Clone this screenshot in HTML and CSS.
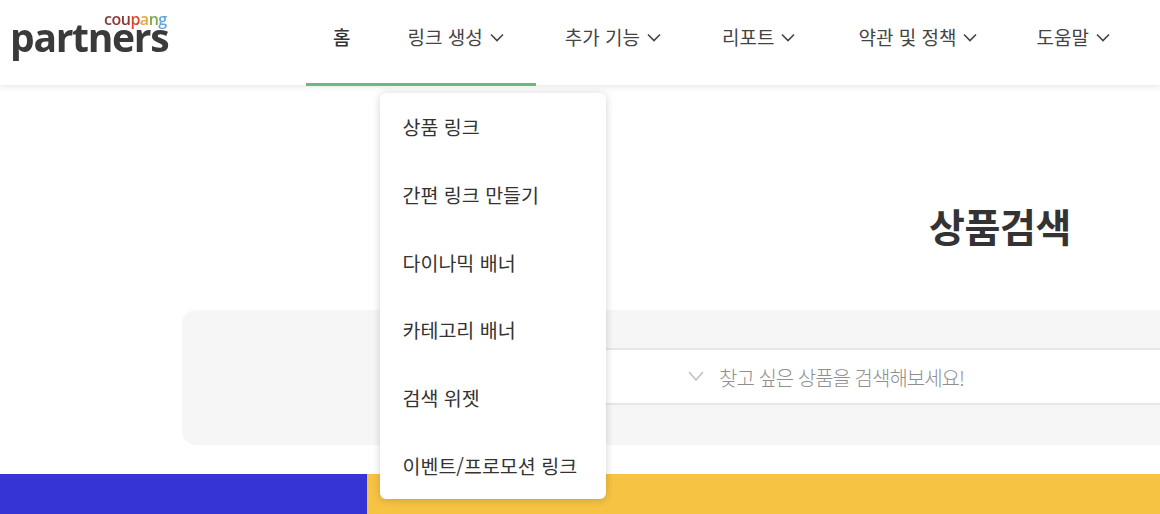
FILE: index.html
```html
<!DOCTYPE html>
<html lang="ko">
<head>
<meta charset="utf-8">
<title>Coupang Partners</title>
<link rel="stylesheet" href="styles.css">
</head>
<body>
<header class="header">
  <a class="logo">
    <span class="logo-top"><span class="c1">cou</span><span class="c2">p</span><span class="c3">a</span><span class="c4">n</span><span class="c5">g</span></span>
    <span class="logo-main">partners</span>
  </a>
  <nav class="nav">
    <a class="nav-item home">홈</a>
    <a class="nav-item link">링크 생성<svg class="chev" viewBox="0 0 14 9"><path d="M1 1.5l6 6 6-6"/></svg></a>
    <a class="nav-item extra">추가 기능<svg class="chev" viewBox="0 0 14 9"><path d="M1 1.5l6 6 6-6"/></svg></a>
    <a class="nav-item report">리포트<svg class="chev" viewBox="0 0 14 9"><path d="M1 1.5l6 6 6-6"/></svg></a>
    <a class="nav-item terms">약관 및 정책<svg class="chev" viewBox="0 0 14 9"><path d="M1 1.5l6 6 6-6"/></svg></a>
    <a class="nav-item help">도움말<svg class="chev" viewBox="0 0 14 9"><path d="M1 1.5l6 6 6-6"/></svg></a>
  </nav>
  <div class="active-bar"></div>
</header>
<ul class="menu">
  <li>상품 링크</li>
  <li>간편 링크 만들기</li>
  <li>다이나믹 배너</li>
  <li>카테고리 배너</li>
  <li>검색 위젯</li>
  <li>이벤트/프로모션 링크</li>
</ul>
<main class="main">
  <h1 class="title">상품검색</h1>
  <section class="panel">
    <div class="search">
      <svg class="search-chev" viewBox="0 0 16 10"><path d="M1 1l7 8 7-8"/></svg>
      <span class="placeholder">찾고 싶은 상품을 검색해보세요!</span>
    </div>
  </section>
  <section class="banners">
    <div class="banner-blue"></div>
    <div class="banner-yellow"></div>
  </section>
</main>
</body>
</html>
```
FILE: styles.css
```css
* { box-sizing: border-box; }
html, body { margin: 0; padding: 0; }
body {
  width: 1160px;
  height: 514px;
  overflow: hidden;
  position: relative;
  background: #fff;
  font-family: "Noto Sans CJK KR", "Noto Sans", sans-serif;
  color: #333;
}
.header {
  height: 85px;
  display: flex;
  align-items: flex-start;
  position: relative;
  background: #fff;
  box-shadow: 0 2px 6px rgba(0, 0, 0, 0.09);
  z-index: 2;
}
.logo {
  width: 306px;
  padding: 12px 0 0 10px;
  display: flex;
  flex-direction: column;
  filter: blur(0.4px);
}
.logo-top {
  font-family: "Open Sans", sans-serif;
  font-weight: 600;
  font-size: 16px;
  line-height: 14px;
  letter-spacing: -0.5px;
  margin-left: 94px;
}
.c1 { color: #8a3a36; }
.c2 { color: #d9482f; }
.c3 { color: #e8a73c; }
.c4 { color: #7fa94f; }
.c5 { color: #62a5de; }
.logo-main {
  font-family: "Open Sans", sans-serif;
  font-weight: 700;
  font-size: 39px;
  line-height: 22px;
  letter-spacing: -1.3px;
  color: #3a3a3a;
}
.nav {
  display: flex;
  align-items: center;
  height: 72px;
  font-size: 19px;
  color: #444;
}
.nav-item {
  display: flex;
  align-items: center;
  white-space: nowrap;
}
.nav-item.home { margin-left: 27px; font-weight: 500; color: #333; }
.nav-item.link { margin-left: 57px; }
.nav-item.extra { margin-left: 61px; }
.nav-item.report { margin-left: 61px; }
.nav-item.terms { margin-left: 63px; }
.nav-item.help { margin-left: 59px; }
.chev {
  width: 14px;
  height: 9px;
  margin-left: 7px;
  margin-top: 3px;
  fill: none;
  stroke: #444;
  stroke-width: 1.6;
}
.active-bar {
  position: absolute;
  left: 306px;
  top: 83px;
  width: 230px;
  height: 3px;
  background: #6cb97f;
}
.menu {
  position: absolute;
  left: 380px;
  top: 93px;
  width: 226px;
  height: 406px;
  margin: 0;
  padding: 0;
  list-style: none;
  display: flex;
  flex-direction: column;
  background: #fff;
  border-radius: 6px;
  box-shadow: 0 1px 8px rgba(0, 0, 0, 0.18);
  z-index: 3;
}
.menu li {
  flex: 1;
  display: flex;
  align-items: center;
  padding-left: 22.5px;
  font-size: 19.5px;
  color: #333;
  white-space: nowrap;
}
.main { display: flex; flex-direction: column; }
.title {
  margin: 115px 0 0;
  padding-right: 89px;
  height: 110px;
  text-align: right;
  font-size: 39px;
  line-height: 50px;
  font-weight: 600;
  letter-spacing: -0.4px;
  color: #333;
}
.panel {
  margin-left: 182px;
  margin-right: -20px;
  height: 135px;
  padding-top: 38px;
  padding-left: 300px;
  background: #f6f6f6;
  border-radius: 14px;
}
.search {
  height: 57px;
  display: flex;
  align-items: center;
  padding-left: 206px;
  background: #fff;
  border-top: 2px solid #e6e6e6;
  border-bottom: 2px solid #e6e6e6;
}
.search-chev {
  width: 16px;
  height: 10px;
  margin-right: 15px;
  margin-top: -1px;
  fill: none;
  stroke: #bbb;
  stroke-width: 1.4;
}
.placeholder {
  padding-top: 2px;
  font-size: 20px;
  font-weight: 300;
  letter-spacing: -1px;
  color: #8f8f8f;
  white-space: nowrap;
}
.banners {
  margin-top: 29px;
  height: 40px;
  display: flex;
}
.banner-blue { width: 367px; background: #3734d6; }
.banner-yellow { flex: 1; background: #f6c343; }
```
